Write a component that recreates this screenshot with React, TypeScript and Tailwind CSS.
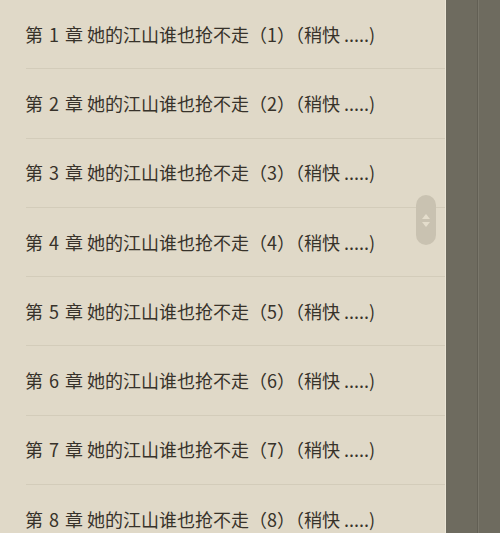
const chapters = [1, 2, 3, 4, 5, 6, 7, 8];

export default function App() {
  return (
    <div className="flex h-[533px] w-[500px] overflow-hidden bg-[#6e6b5f]">
      <div className="relative h-full w-[446px] shrink-0 overflow-hidden bg-[#e0d9c8] border-r border-[#ebe5d6]">
        <ul className="flex flex-col pl-[26px]">
          {chapters.map((n) => (
            <li
              key={n}
              className="flex h-[69.3px] shrink-0 items-center border-b border-[#d3ccba] text-[18px] text-[#37322a] [font-family:'Noto_Sans_CJK_SC','Noto_Sans',sans-serif]"
            >
              <span className="-ml-px whitespace-nowrap">
                第<span className="mx-[6px]">{n}</span>章 她的江山谁也抢不走（{n}）（稍快 .....)
              </span>
            </li>
          ))}
        </ul>
        <div className="absolute left-[416px] top-[195px] flex h-[50px] w-[20px] flex-col items-center justify-center gap-[3px] rounded-full bg-[#c9c2b1]">
          <svg width="8" height="5" viewBox="0 0 8 5">
            <path d="M4 0 L8 5 L0 5 Z" fill="#e4ddcc" />
          </svg>
          <svg width="8" height="5" viewBox="0 0 8 5">
            <path d="M0 0 L8 0 L4 5 Z" fill="#e4ddcc" />
          </svg>
        </div>
      </div>
      <div className="h-full w-[32px] shrink-0 border-r border-[#625f54]" />
      <div className="h-full flex-1 border-l border-[#7a776b]" />
    </div>
  );
}
